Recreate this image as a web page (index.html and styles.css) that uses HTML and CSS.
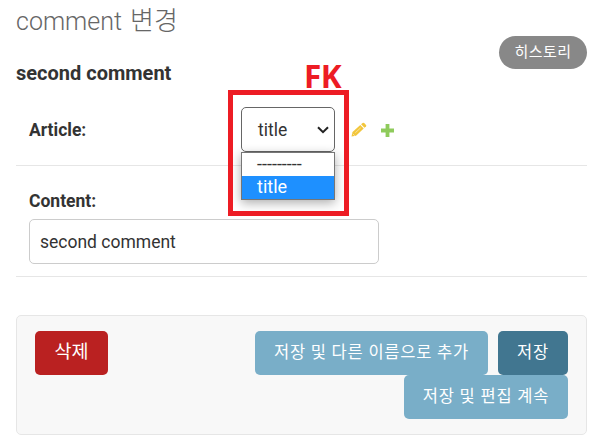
FILE: index.html
```html
<!DOCTYPE html>
<html lang="ko">
<head>
<meta charset="utf-8">
<title>comment 변경</title>
<link rel="stylesheet" href="styles.css">
</head>
<body>
<main class="content">
  <header class="heading">
    <div>
      <h1>comment <span class="ko">변경</span></h1>
      <h2>second comment</h2>
    </div>
    <a class="history">히스토리</a>
  </header>
  <section class="row article">
    <label>Article:</label>
    <div class="select-wrap">
      <div class="select"><span>title</span>
        <svg width="12" height="8" viewBox="0 0 12 8"><path d="M1 1.2 6 6.2 11 1.2" fill="none" stroke="#222" stroke-width="2"/></svg>
      </div>
      <div class="menu"><div class="option dashes">---------</div><div class="option selected">title</div></div>
      <div class="marker"></div>
      <strong class="marker-label">FK</strong>
    </div>
    <svg class="pencil" width="16" height="16" viewBox="0 0 16 16"><path d="M.5 14.5 1.5 10 9.3 3 12.7 6.4 5 13.7Z" fill="#f2c63c"/><path d="m10.1 2.3 1.5-1.3q.8-.6 1.6.1l1.8 1.8q.7.8 0 1.6l-1.5 1.3Z" fill="#f2c63c"/><path d="m4.3 10.8 5.4-5M1.8 11.8l2 2" fill="none" stroke="#fff" stroke-opacity=".7" stroke-width=".7"/></svg>
    <svg class="plus" width="13" height="13" viewBox="0 0 13 13"><path d="M4.6 0h3.8v4.6H13v3.8H8.4V13H4.6V8.4H0V4.6h4.6Z" fill="#8fcb5c"/></svg>
  </section>
  <section class="row body-field">
    <label>Content:</label>
    <div class="input">second comment</div>
  </section>
  <footer class="submit">
    <a class="btn delete">삭제</a>
    <div class="actions">
      <a class="btn other">저장 및 다른 이름으로 추가</a>
      <a class="btn save">저장</a>
      <a class="btn other continue">저장 및 편집 계속</a>
    </div>
  </footer>
</main>
</body>
</html>
```
FILE: styles.css
```css
* { box-sizing: border-box; }
body {
  margin: 0;
  background: #fff;
  color: #333;
  font-family: Roboto, "Noto Sans CJK KR", sans-serif;
  font-size: 17.5px;
  overflow: hidden;
}
.content { width: 571px; margin-left: 16px; }
.heading { display: flex; justify-content: space-between; height: 94px; }
h1 {
  height: 30px;
  margin: 7px 0 0;
  font-size: 25px;
  line-height: 30px;
  font-weight: 300;
  color: #666;
  white-space: nowrap;
}
h1 .ko { margin-left: 2px; font-size: 26px; line-height: 1; }
h2 { margin: 24px 0 0; font-size: 20px; line-height: 24px; font-weight: 700; }
.history {
  width: 88px;
  height: 33px;
  margin-top: 36px;
  border-radius: 17px;
  background: #888;
  color: #fff;
  font-size: 15px;
  letter-spacing: .4px;
  line-height: 32px;
  text-align: center;
}
.row { border-bottom: 1px solid #e6e6e6; padding-left: 13px; }
label { font-weight: 700; line-height: 22px; }
.article { display: flex; align-items: flex-start; height: 72px; padding-top: 13px; }
.article label { width: 212px; margin-top: 12px; }
.select-wrap { position: relative; width: 94px; }
.select {
  display: flex;
  align-items: center;
  justify-content: space-between;
  height: 45px;
  padding: 0 5px 0 16px;
  border: 1px solid #666;
  border-radius: 5px;
}
.menu {
  position: absolute;
  z-index: 1;
  top: 45px;
  left: 0;
  width: 94px;
  height: 48px;
  border: 1px solid #767676;
  background: #fff;
  box-shadow: 0 3px 10px rgba(0, 0, 0, .32);
}
.option { height: 23px; padding-left: 15px; font-size: 18px; line-height: 22px; color: #333; }
.option.selected { background: #1e90ff; color: #fff; }
.marker {
  position: absolute;
  z-index: 2;
  top: -17px;
  left: -13px;
  width: 121px;
  height: 126px;
  border: 5px solid #ed1c24;
}
.marker-label {
  position: absolute;
  top: -49px;
  left: 63px;
  color: #ed1c24;
  font: 700 31.5px/36px "Open Sans", sans-serif;
  letter-spacing: -.5px;
}
.pencil { margin: 15px 0 0 16px; }
.plus { margin: 17px 0 0 14px; }
.body-field { height: 111px; padding-top: 24px; }
.body-field label { display: block; }
.input {
  width: 350px;
  height: 45px;
  margin-top: 7px;
  padding-left: 10px;
  border: 1px solid #ccc;
  border-radius: 5px;
  line-height: 45px;
}
.submit {
  display: flex;
  justify-content: space-between;
  height: 120px;
  margin-top: 38px;
  padding: 15px 18px;
  border: 1px solid #e6e6e6;
  border-radius: 5px;
  background: #f8f8f8;
}
.actions { display: flex; flex-wrap: wrap; justify-content: flex-end; align-content: flex-start; column-gap: 10px; width: 320px; }
.btn {
  height: 44px;
  border-radius: 5px;
  color: #fff;
  font-size: 16.5px;
  letter-spacing: .78px;
  line-height: 44px;
  text-align: center;
  white-space: nowrap;
}
.delete { width: 73px; background: #ba2121; font-size: 18.5px; letter-spacing: 0; line-height: 43px; }
.other { width: 233px; background: #79aec8; }
.save { width: 70px; background: #417690; }
.continue { width: 164px; }
```
